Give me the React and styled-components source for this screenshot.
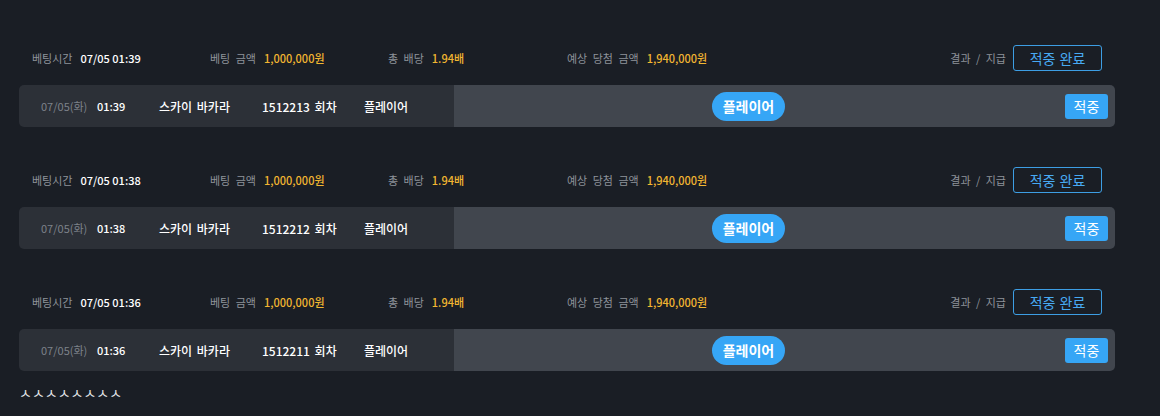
import React from "react";
import styled, { createGlobalStyle } from "styled-components";

const Global = createGlobalStyle`
  html, body { margin: 0; padding: 0; background: #1a1e25; }
  body { font-family: "Noto Sans CJK KR", "Noto Sans", sans-serif; }
`;

const Page = styled.div`
  width: 1160px;
  height: 416px;
  box-sizing: border-box;
  padding: 45px 45px 0 19px;
  background: #1a1e25;
  overflow: hidden;
`;

const Block = styled.section`
  display: flex;
  flex-direction: column;
  gap: 14px;
  margin-bottom: 40px;
  &:last-of-type { margin-bottom: 12px; }
`;

const Header = styled.div`
  display: grid;
  grid-template-columns: 178px 178px 179px 1fr auto;
  align-items: center;
  height: 26px;
  padding: 0 13px 0 13px;
`;

const Field = styled.div`
  display: flex;
  align-items: center;
  gap: ${(p) => p.$gap ?? 8}px;
  white-space: nowrap;
`;

const Label = styled.span`
  color: #8e939a;
  font-size: 11px;
  word-spacing: 3px;
`;

const Value = styled.span`
  color: ${(p) => (p.$yellow ? "#f2b631" : "#ffffff")};
  font-size: 11px;
  font-weight: 500;
`;

const OutlineButton = styled.button`
  width: 89px;
  height: 26px;
  box-sizing: border-box;
  border: 1px solid #3d9ee4;
  border-radius: 3px;
  background: transparent;
  color: #48aaf3;
  font-family: inherit;
  font-size: 14px;
  word-spacing: 1px;
  padding: 0;
  margin-left: 7px;
`;

const Card = styled.div`
  display: flex;
  height: 42px;
  width: 1096px;
  border-radius: 5px;
  overflow: hidden;
`;

const Info = styled.div`
  display: flex;
  align-items: center;
  width: 435px;
  background: #2c3037;
  padding-left: 22px;
  box-sizing: border-box;
`;

const Cell = styled.span`
  width: ${(p) => p.$w}px;
  color: ${(p) => (p.$muted ? "#7d828a" : "#ffffff")};
  font-size: ${(p) => (p.$num ? 11 : 12)}px;
  font-weight: ${(p) => (p.$muted ? 400 : 500)};
  word-spacing: 2px;
  white-space: nowrap;
`;

const Result = styled.div`
  flex: 1;
  display: flex;
  align-items: center;
  background: #41464e;
`;

const PillArea = styled.div`
  flex: 1;
  display: flex;
  justify-content: center;
`;

const Pill = styled.span`
  display: inline-flex;
  align-items: center;
  justify-content: center;
  height: 29px;
  padding: 0 11px;
  border-radius: 15px;
  background: #36a6f6;
  color: #ffffff;
  font-size: 14px;
  font-weight: 700;
`;

const BadgeArea = styled.div`
  width: 72px;
  display: flex;
  justify-content: flex-end;
  padding-right: 7px;
  box-sizing: border-box;
`;

const Badge = styled.span`
  display: inline-flex;
  align-items: center;
  justify-content: center;
  width: 43px;
  height: 25px;
  border-radius: 3px;
  background: #36a6f6;
  color: #ffffff;
  font-size: 14px;
`;

const Footer = styled.div`
  color: #e6e8eb;
  font-size: 14px;
  line-height: 18px;
`;

const bets = [
  { time: "01:39", round: "1512213" },
  { time: "01:38", round: "1512212" },
  { time: "01:36", round: "1512211" },
];

export default function App() {
  return (
    <>
      <Global />
      <Page>
        {bets.map((b) => (
          <Block key={b.round}>
            <Header>
              <Field>
                <Label>베팅시간</Label>
                <Value>07/05 {b.time}</Value>
              </Field>
              <Field>
                <Label>베팅 금액</Label>
                <Value $yellow>1,000,000원</Value>
              </Field>
              <Field>
                <Label>총 배당</Label>
                <Value $yellow>1.94배</Value>
              </Field>
              <Field>
                <Label>예상 당첨 금액</Label>
                <Value $yellow>1,940,000원</Value>
              </Field>
              <Field $gap={0}>
                <Label>결과 / 지급</Label>
                <OutlineButton>적중 완료</OutlineButton>
              </Field>
            </Header>
            <Card>
              <Info>
                <Cell $muted $num $w={56}>07/05(화)</Cell>
                <Cell $num $w={62}>{b.time}</Cell>
                <Cell $w={103}>스카이 바카라</Cell>
                <Cell $w={102}>{b.round} 회차</Cell>
                <Cell $w={70}>플레이어</Cell>
              </Info>
              <Result>
                <PillArea>
                  <Pill>플레이어</Pill>
                </PillArea>
                <BadgeArea>
                  <Badge>적중</Badge>
                </BadgeArea>
              </Result>
            </Card>
          </Block>
        ))}
        <Footer>ㅅㅅㅅㅅㅅㅅㅅㅅ</Footer>
      </Page>
    </>
  );
}
